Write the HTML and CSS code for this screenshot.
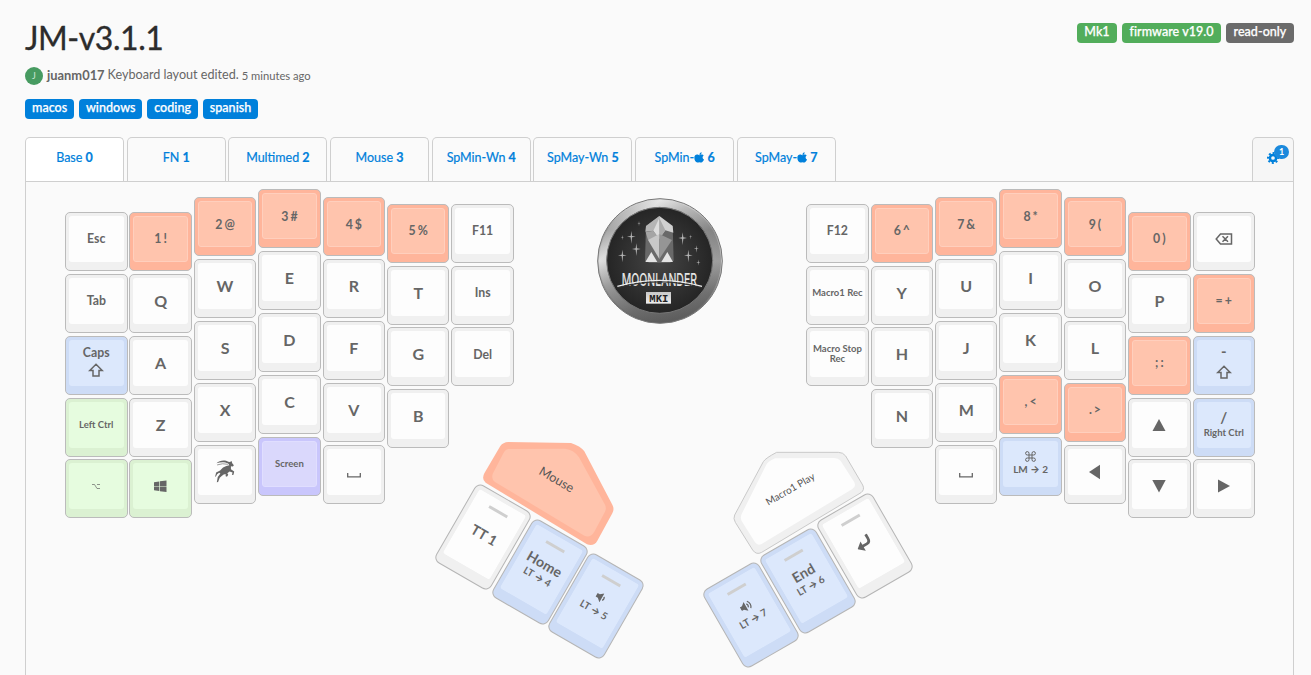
FILE: index.html
```html
<!DOCTYPE html>
<html lang="en">
<head>
<meta charset="utf-8">
<title>JM-v3.1.1</title>
<link rel="stylesheet" href="styles.css">
</head>
<body>
<svg class="defs" aria-hidden="true">
  <symbol id="apple" viewBox="0 0 30 32"><path d="M16 8C16 4 19 1 23 0c0 5-3 8-7 8zM9 7c3 0 5 2 7 2s5-2 8-2c2 0 4 1 5 3-5 3-4 10 1 12-2 5-5 9-8 9-2 0-4-1-6-1s-4 1-6 1C5 31 1 24 1 17 1 10 5 7 9 7z"/></symbol>
  <symbol id="shift" viewBox="0 0 16 14"><path d="M8 1.2 14.2 7.5H11V13H5V7.5H1.8z" fill="none" stroke="currentColor" stroke-width="1.5"/></symbol>
  <symbol id="space" viewBox="0 0 14 5"><path d="M.7 0V3.8H13.3V0" fill="none" stroke="currentColor" stroke-width="1.3"/></symbol>
</svg>
<header class="head">
  <div>
    <h1 class="title">JM-v3.1.1</h1>
    <p class="byline"><span class="avatar">J</span><b>juanm017</b><span>Keyboard layout edited.</span><small>5 minutes ago</small></p>
    <div class="tags"><span class="tag">macos</span><span class="tag">windows</span><span class="tag">coding</span><span class="tag">spanish</span></div>
  </div>
  <div class="badges"><span class="tag green">Mk1</span><span class="tag green">firmware v19.0</span><span class="tag gray">read-only</span></div>
</header>
<nav class="tabs">
  <a class="tab active">Base&nbsp;<b>0</b></a>
  <a class="tab">FN&nbsp;<b>1</b></a>
  <a class="tab">Multimed&nbsp;<b>2</b></a>
  <a class="tab">Mouse&nbsp;<b>3</b></a>
  <a class="tab">SpMin-Wn&nbsp;<b>4</b></a>
  <a class="tab">SpMay-Wn&nbsp;<b>5</b></a>
  <a class="tab">SpMin-<svg class="apple"><use href="#apple"/></svg>&nbsp;<b>6</b></a>
  <a class="tab">SpMay-<svg class="apple"><use href="#apple"/></svg>&nbsp;<b>7</b></a>
  <a class="tab settings"><svg class="gear" viewBox="0 0 24 24"><g fill="none" stroke="#0080db"><circle cx="12" cy="12" r="6.2" stroke-width="5"/><circle cx="12" cy="12" r="10" stroke-width="4" stroke-dasharray="3.93 3.924" stroke-dashoffset="1.96"/></g></svg><span class="count">1</span></a>
</nav>
<main class="board">
  <div class="half">
    <div class="col c-low">
      <div class="key"><div class="face md">Esc</div></div>
      <div class="key"><div class="face md">Tab</div></div>
      <div class="key blue"><div class="face md caps"><span>Caps</span><svg class="shift"><use href="#shift"/></svg></div></div>
      <div class="key lime"><div class="face sm">Left Ctrl</div></div>
      <div class="key lime"><div class="face"><svg class="opt" viewBox="0 0 8 5"><path d="M0 .5H2.5L5 4.5H8M5 .5H8" fill="none" stroke="currentColor" stroke-width=".7"/></svg></div></div>
    </div>
    <div class="col c-low">
      <div class="key orange"><div class="face md">1 !</div></div>
      <div class="key"><div class="face">Q</div></div>
      <div class="key"><div class="face">A</div></div>
      <div class="key"><div class="face">Z</div></div>
      <div class="key lime"><div class="face"><svg class="win" viewBox="0 0 38 37"><path d="M0 6 16 4V17.500H0zM18 3.600 38 1V17.500H18zM0 19.500H16V33L0 31zM18 19.500H38V36L18 33.400z"/></svg></div></div>
    </div>
    <div class="col c-mid">
      <div class="key orange"><div class="face md">2 @</div></div>
      <div class="key"><div class="face">W</div></div>
      <div class="key"><div class="face">S</div></div>
      <div class="key"><div class="face">X</div></div>
      <div class="key"><div class="face"><svg class="ibex" viewBox="0 0 60 70"><path d="M4 10C14 0 30-1 40 5L45 6 50 3 52 10 57 16 54 20 48 19 48 28 58 35 56 45 51 46 53 38 44 35 37 40 40 45 36 51 31 49 34 44 27 43 20 49 14 54 9 67 5 68 8 52 16 41 12 39 6 43 2 51 0 50 3 38 15 32 24 23 34 18 43 16 39 10C30 6 17 5 4 10z"/><path d="M6 15Q22 9 39 13" fill="none" stroke="currentColor" stroke-width="2"/></svg></div></div>
    </div>
    <div class="col c-high">
      <div class="key orange"><div class="face md">3 #</div></div>
      <div class="key"><div class="face">E</div></div>
      <div class="key"><div class="face">D</div></div>
      <div class="key"><div class="face">C</div></div>
      <div class="key purple"><div class="face sm">Screen</div></div>
    </div>
    <div class="col c-mid">
      <div class="key orange"><div class="face md">4 $</div></div>
      <div class="key"><div class="face">R</div></div>
      <div class="key"><div class="face">F</div></div>
      <div class="key"><div class="face">V</div></div>
      <div class="key"><div class="face"><svg class="space"><use href="#space"/></svg></div></div>
    </div>
    <div class="col c-inner">
      <div class="key orange"><div class="face md">5 %</div></div>
      <div class="key"><div class="face">T</div></div>
      <div class="key"><div class="face">G</div></div>
      <div class="key"><div class="face">B</div></div>
    </div>
    <div class="col c-inner">
      <div class="key"><div class="face md">F11</div></div>
      <div class="key"><div class="face md">Ins</div></div>
      <div class="key"><div class="face md">Del</div></div>
    </div>
  </div>

  <svg class="logo" viewBox="0 0 420 420">
    <defs>
      <linearGradient id="ring" x1="0" y1="0" x2="1" y2="1"><stop offset="0" stop-color="#888"/><stop offset=".15" stop-color="#b5b5b5"/><stop offset=".25" stop-color="#f2f2f2"/><stop offset=".38" stop-color="#aaa"/><stop offset=".6" stop-color="#6d6d6d"/><stop offset=".85" stop-color="#555"/><stop offset="1" stop-color="#999"/></linearGradient>
      <linearGradient id="ringSide" x1="0" x2="0" y1="0" y2="1"><stop offset="0" stop-color="#e0e0e0"/><stop offset=".25" stop-color="#959595"/><stop offset=".5" stop-color="#d0d0d0"/><stop offset=".75" stop-color="#858585"/><stop offset="1" stop-color="#5a5a5a"/></linearGradient>
      <linearGradient id="silver" x1="0" x2="0" y1="0" y2="1"><stop offset="0" stop-color="#c8c8c8"/><stop offset="1" stop-color="#eee"/></linearGradient>
      <radialGradient id="disc"><stop offset="0" stop-color="#454545"/><stop offset="1" stop-color="#252525"/></radialGradient>
      <path id="star" d="M0-17 2-2 13 0 2 2 0 21-2 2-13 0-2-2z"/>
    </defs>
    <circle cx="210" cy="213" r="187" fill="url(#ringSide)" stroke="#777" stroke-width="3"/>
    <circle cx="210" cy="213" r="183" fill="url(#ring)" opacity=".45"/>
    <circle cx="209" cy="211" r="159" fill="url(#disc)" stroke="#777" stroke-width="3"/>
    <path d="M208 78 248 108 251 212 239 218H178L165 212 168 108z" fill="#696969"/>
    <path d="M208 78 168 108 166 125 190 122 208 145z" fill="#b5b5b5"/>
    <path d="M208 78 248 108 250 128 226 121 208 145z" fill="#d1d1d1"/>
    <path d="M208 84 190 122 208 148z" fill="#ddd"/><path d="M208 84 226 121 208 148z" fill="#aaa"/>
    <path d="M167 127 190 122 208 146 174 150z" fill="#a5a5a5"/>
    <path d="M174 150 208 132V207z" fill="#c8c8c8"/><path d="M208 132 246 150 208 207z" fill="#959595"/>
    <path d="M184 186 166 216H202zM232 186 214 216H249z" fill="#e4e4e4"/>
    <g fill="#b5b5b5"><use href="#star" x="124" y="140"/><use href="#star" x="97" y="196"/><use href="#star" x="139" y="177"/><use href="#star" x="278" y="144"/><use href="#star" x="295" y="196"/><use href="#star" transform="translate(319 176) scale(.6)"/><use href="#star" transform="translate(302 140) scale(.4)"/><use href="#star" transform="translate(147 100) scale(.4)"/><use href="#star" transform="translate(97 142) scale(.4)"/><use href="#star" transform="translate(325 217) scale(.5)"/></g>
    <text class="logo-name" x="95" y="287" textLength="226" lengthAdjust="spacingAndGlyphs">MOONLANDER</text>
    <path d="M82 293Q209 258 336 293" fill="none" stroke="#333" stroke-width="4"/>
    <path d="M82 289Q209 253 336 289" fill="none" stroke="#eee" stroke-width="4"/>
    <path d="M168 306H243V341H168z" fill="url(#silver)"/>
    <text class="logo-mk" x="178" y="335" textLength="57" lengthAdjust="spacingAndGlyphs">MKI</text>
  </svg>

  <div class="half">
    <div class="col c-inner">
      <div class="key"><div class="face md">F12</div></div>
      <div class="key"><div class="face sm">Macro1 Rec</div></div>
      <div class="key"><div class="face sm">Macro Stop Rec</div></div>
    </div>
    <div class="col c-inner">
      <div class="key orange"><div class="face md">6 ^</div></div>
      <div class="key"><div class="face">Y</div></div>
      <div class="key"><div class="face">H</div></div>
      <div class="key"><div class="face">N</div></div>
    </div>
    <div class="col c-mid">
      <div class="key orange"><div class="face md">7 &amp;</div></div>
      <div class="key"><div class="face">U</div></div>
      <div class="key"><div class="face">J</div></div>
      <div class="key"><div class="face">M</div></div>
      <div class="key"><div class="face"><svg class="space"><use href="#space"/></svg></div></div>
    </div>
    <div class="col c-high">
      <div class="key orange"><div class="face md">8 *</div></div>
      <div class="key"><div class="face">I</div></div>
      <div class="key"><div class="face">K</div></div>
      <div class="key orange"><div class="face md">, &lt;</div></div>
      <div class="key blue"><div class="face lm"><svg class="cmd" viewBox="0 0 11 11"><path d="M4 4V2.300A1.700 1.700 0 1 0 2.300 4H8.700A1.700 1.700 0 1 0 7 2.300V8.700A1.700 1.700 0 1 0 8.700 7H2.300A1.700 1.700 0 1 0 4 8.700z" fill="none" stroke="currentColor"/></svg><span class="layer">LM <i>→</i> 2</span></div></div>
    </div>
    <div class="col c-mid">
      <div class="key orange"><div class="face md">9 (</div></div>
      <div class="key"><div class="face">O</div></div>
      <div class="key"><div class="face">L</div></div>
      <div class="key orange"><div class="face md">. &gt;</div></div>
      <div class="key"><div class="face"><svg class="arrow" viewBox="0 0 14 14"><path d="M1 7 12 -.3V14.300z"/></svg></div></div>
    </div>
    <div class="col c-low">
      <div class="key orange"><div class="face md">0 )</div></div>
      <div class="key"><div class="face">P</div></div>
      <div class="key orange"><div class="face md">; :</div></div>
      <div class="key"><div class="face"><svg class="arrow" viewBox="0 0 14 14"><path d="M7 1 13.500 13H.5z"/></svg></div></div>
      <div class="key"><div class="face"><svg class="arrow" viewBox="0 0 14 14"><path d="M7 13.500 13.700 1H.3z"/></svg></div></div>
    </div>
    <div class="col c-low">
      <div class="key"><div class="face"><svg class="bksp" viewBox="0 0 18 12"><path d="M5.500 1H16.500V11H5.500L1.200 6zM7.500 3.200 13 8.800M13 3.200 7.500 8.800" fill="none" stroke="currentColor" stroke-width="1.500"/></svg></div></div>
      <div class="key orange"><div class="face md">= +</div></div>
      <div class="key blue"><div class="face dash"><span>-</span><svg class="shift"><use href="#shift"/></svg></div></div>
      <div class="key blue"><div class="face slash"><span>/</span><span class="layer ctrl">Right Ctrl</span></div></div>
      <div class="key"><div class="face"><svg class="arrow" viewBox="0 0 14 14"><path d="M13 7 1 .5V13.500z"/></svg></div></div>
    </div>
  </div>

  <svg class="thumb-wide wide-left" viewBox="0 0 690 360">
    <path d="M250 36 438 39Q466 48 478 64L562 224Q569 237 562 250L517 332Q507 350 486 343L182 158Q169 147 178 130L226 48Q234 37 250 36z" fill="#ffb59b"/>
    <path d="M250 57 420 56Q448 60 462 82L540 224Q545 235 540 245L508 305Q496 325 478 317L210 156Q197 145 204 130L234 72Q240 58 250 57z" fill="#ffc4ad"/>
    <text x="0" y="0" class="wide-text mouse" transform="translate(395 148) rotate(30)">Mouse</text>
  </svg>
  <div class="thumb t1"><div class="face"><span>TT 1</span></div></div>
  <div class="thumb blue t2"><div class="face"><span>Home</span><span class="layer">LT <i>→</i> 4</span></div></div>
  <div class="thumb blue t3"><div class="face"><svg class="vol" viewBox="0 0 12 10"><path d="M1 3H3.500L7 0V10L3.500 7H1z"/><path d="M8.500 3Q10 5 8.500 7" fill="none" stroke="currentColor" stroke-width="1.300"/></svg><span class="layer">LT <i>→</i> 5</span></div></div>

  <svg class="thumb-wide wide-right" viewBox="0 0 690 360">
    <path d="M245 37 430 37Q444 37 452 48L503 135Q510 149 498 158L200 337Q184 346 173 330L121 247Q114 236 119 225L205 65Q212 54 245 37z" fill="#f0f0f0" stroke="#c9c9c9" stroke-width="3"/>
    <path d="M240 55 415 54Q430 54 437 63L478 127Q484 140 472 147L200 312Q188 318 180 307L140 243Q135 232 140 222L212 78Q217 65 240 55z" fill="#fdfdfd"/>
    <text x="0" y="0" class="wide-text macro" transform="translate(285 146) rotate(-30)">Macro1 Play</text>
  </svg>
  <div class="thumb right t4"><div class="face"><svg class="enter" viewBox="0 0 16 14"><path d="M13.500 0V4.500Q13.500 8.500 10 8.500H5" fill="none" stroke="currentColor" stroke-width="2.600"/><path d="M0 8.500 6 3.500V13.500z"/></svg></div></div>
  <div class="thumb right blue t5"><div class="face"><span>End</span><span class="layer">LT <i>→</i> 6</span></div></div>
  <div class="thumb right blue t6"><div class="face"><svg class="vol" viewBox="0 0 12 10"><path d="M0 3H2.500L6 0V10L2.500 7H0z"/><path d="M7.500 3Q9 5 7.500 7M9.300 1Q12.500 5 9.300 9" fill="none" stroke="currentColor" stroke-width="1.200"/></svg><span class="layer">LT <i>→</i> 7</span></div></div>
</main>
</body>
</html>
```
FILE: styles.css
```css
* { box-sizing: border-box; }
body {
  margin: 0;
  height: 675px;
  padding: 0 17px 0 25px;
  overflow: hidden;
  background: #fafafa;
  color: #666;
  font-family: Lato, "Liberation Sans", sans-serif;
  font-size: 13px;
}
.defs { display: none; }
svg { fill: currentColor; flex: none; }
.head { display: flex; justify-content: space-between; height: 137px; padding-top: 18px; }
.title { margin: 0; font-size: 32px; line-height: 40px; font-weight: 400; letter-spacing: -.45px; color: #2c2c2c; -webkit-text-stroke: .3px #2c2c2c; }
.byline { display: flex; align-items: center; height: 18px; margin: 9px 0 14px; line-height: 16px; white-space: pre; font-size: 12.600px; }
.byline b { margin-right: 3px; font-size: 12.900px; }
.byline b, .byline span, .byline small { padding-bottom: 2px; }
.byline small { margin-left: 3px; font-size: 11.200px; padding-bottom: 1px; }
.byline .avatar {
  width: 18px; height: 18px; margin-right: 4px; padding: 0;
  border-radius: 50%;
  background: #479b61; color: #cfe8d6;
  font-size: 9px; line-height: 18px; text-align: center;
}
.tags, .badges { display: flex; gap: 4.700px; }
.badges { padding-top: 5px; }
.tag {
  height: 20px; padding: 0 7px;
  border-radius: 4px;
  background: #0080db; color: #fff;
  font-size: 12.500px; line-height: 18px; font-weight: 500;
  letter-spacing: .05px;
  -webkit-text-stroke: .25px #fff;
}
.badges .tag { padding: 0 7.600px; }
.green { background: #52ad5b; }
.gray { background: #6b6b6b; }
.tabs { display: flex; gap: 2.700px; height: 44px; }
.tab {
  display: flex; align-items: center; justify-content: center;
  width: 99px; padding-bottom: 5px;
  border: 1px solid #cfcfcf; border-bottom: 0;
  border-radius: 5px 5px 0 0;
  color: #0080db; font-size: 12.500px;
  -webkit-text-stroke: .2px #0080db;
}
.active { background: #fff; }
.apple { width: 10px; height: 11px; }
.settings { position: relative; width: 42px; margin-left: auto; background: #f6f6f6; }
.gear { width: 12px; height: 12px; margin: 0 0 -1px -1px; }
.count {
  position: absolute; left: 21px; top: 7px;
  width: 15px; height: 14px;
  border-radius: 7px;
  background: #1b89dc; color: #fff;
  font-size: 9px; line-height: 14px; font-weight: 700; text-align: center;
  -webkit-text-stroke: 0;
}
.board {
  position: relative;
  display: flex; justify-content: space-between; align-items: flex-start;
  height: 520px; padding: 7px 38px 0 39px;
  border: 1px solid #cfcfcf;
}
.half { display: flex; gap: 1.900px; }
.col { display: flex; flex-direction: column; gap: 2.940px; }
.c-low { padding-top: 22.700px; }
.c-mid { padding-top: 8px; }
.c-inner { padding-top: 14.600px; }
.c-high { padding-top: 0; }
.key {
  width: 62.500px; height: 59px; padding: 3px 3px 8px;
  border: 1px solid #bbb; border-radius: 5px;
  background: #f0f0f0;
}
.face {
  display: flex; flex-direction: column; align-items: center; justify-content: center;
  height: 100%;
  border: 1px solid transparent; border-radius: 3px;
  background: #fdfdfd;
  font-size: 16px; line-height: 16px; font-weight: 700; text-align: center;
}
.md { font-size: 12.300px; line-height: 15px; word-spacing: -1px; }
.sm { font-size: 9.500px; line-height: 10px; }
.orange { background: #ffb59b; }
.orange .face { background: #ffc4ad; border-color: #ffcfbd; }
.blue { background: #cddcf6; }
.blue .face { background: #dce8fc; }
.lime { background: #dbf1d2; }
.lime .face { background: #e6fcdf; }
.purple { background: #c9c6fc; }
.purple .face { background: #dad8fc; border-color: #e0deff; }
.layer { font-size: 10px; line-height: 13px; white-space: nowrap; }
.layer i { font-family: "Noto Sans", Inter, sans-serif; font-style: normal; }
.ctrl { font-size: 9.500px; margin-top: 1px; }
.lm { padding-bottom: 1px; }
.shift { width: 16px; height: 14px; margin-top: 3px; }
.caps { padding-bottom: 4px; }
.dash { padding-bottom: 3px; font-size: 15px; line-height: 15px; }
.dash .shift { margin-top: 6px; }
.slash { font-size: 15px; padding-bottom: 1px; }
.opt { width: 8px; height: 5px; }
.win { width: 12.500px; height: 12.500px; }
.ibex { width: 20px; height: 23px; }
.space { width: 14px; height: 5px; margin-top: 8px; }
.cmd { width: 11px; height: 11px; margin-bottom: 1px; }
.arrow { width: 14px; height: 14px; overflow: visible; }
.bksp { width: 18px; height: 12px; }
.vol { width: 12px; height: 10px; margin-bottom: 3px; }
.enter { width: 17px; height: 15px; }

/* emblem between the halves */
.logo { width: 140px; height: 140px; margin-top: 1px; }
.logo-name { font: 500 53px Inter, sans-serif; fill: #e4e4e4; }
.logo-mk { font: 700 34px "Liberation Mono", monospace; fill: #222; }

/* thumb clusters sit freely on the board canvas */
.thumb {
  position: absolute;
  width: 64px; height: 90px; padding: 4px 4px 10px;
  border: 1px solid #b5b5b5; border-radius: 7px;
  background: #f0f0f0;
  transform: rotate(30deg);
}
.thumb .face { font-size: 14px; padding-top: 1px; }
.thumb.blue { background: #cddcf6; }
.thumb::before {
  content: ""; position: absolute; left: 20.500px; top: 12.500px;
  width: 21px; height: 3px; background: #cfcfcf;
}
.right { transform: rotate(-30deg); }
.t1 { left: 424.600px; top: 310.200px; }
.t2 { left: 481.500px; top: 345px; }
.t3 { left: 538.300px; top: 379.300px; }
.t4 { left: 807.300px; top: 319.300px; }
.t5 { left: 750.300px; top: 354.300px; }
.t6 { left: 693.300px; top: 388.300px; }
.thumb-wide { position: absolute; width: 230px; height: 120px; }
.wide-left { left: 399px; top: 248px; }
.wide-right { left: 669px; top: 258px; }
.wide-text { text-anchor: middle; dominant-baseline: central; font-weight: 400; fill: #555; }
.mouse { font-size: 38px; }
.macro { font-size: 30px; }
```
